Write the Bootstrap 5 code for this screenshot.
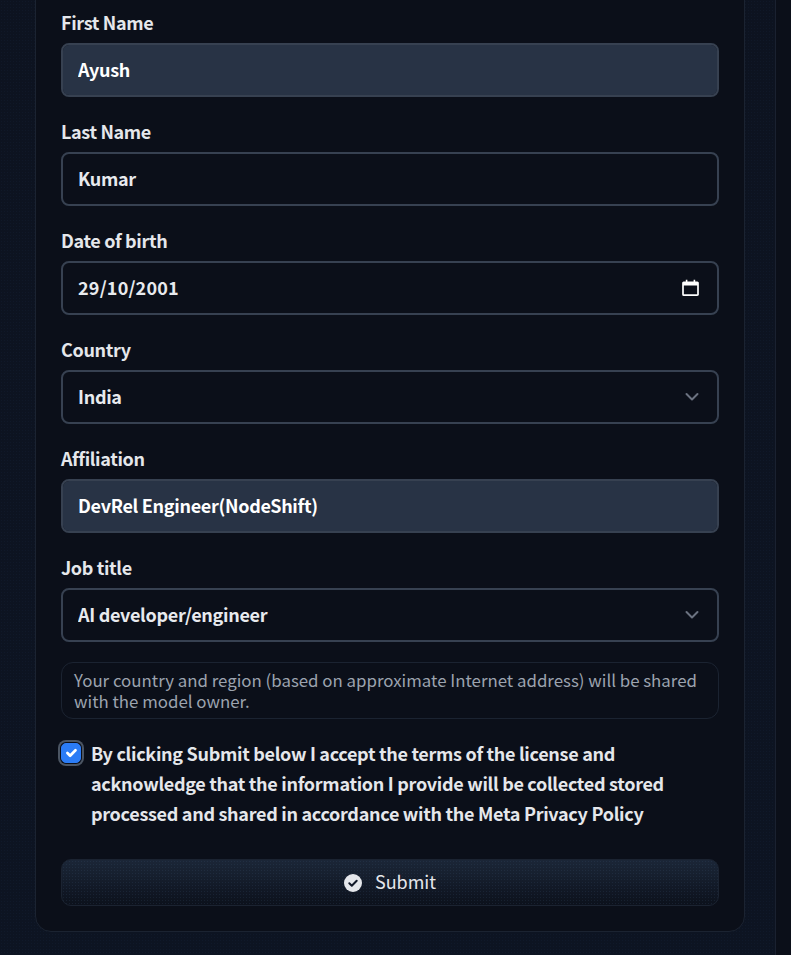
<!DOCTYPE html>
<html lang="en">
<head>
<meta charset="utf-8">
<title>Access form</title>
<link href="https://cdn.jsdelivr.net/npm/bootstrap@5.3.0/dist/css/bootstrap.min.css" rel="stylesheet">
<style>
:root{--page:#0b0f19;--line:#374151;--ink:#e5e7eb;}
html,body{height:955px;overflow:hidden;background:var(--page);}
body{font-family:"Noto Sans CJK JP","Source Sans Pro","Noto Sans",sans-serif;font-size:18px;color:var(--ink);}
.stage{width:776px;height:955px;padding:0 30px 0 35px;border-right:1px solid #1a2130;overflow:hidden;
  background-color:#0c111c;
  background-image:radial-gradient(rgba(40,60,95,.14) .6px,transparent .7px),linear-gradient(to bottom,#0d1320,#0d1422);
  background-size:3px 3px,100% 100%;}
.sheet{margin-top:-12px;height:944px;background:var(--page);border:1px solid #1b2331;border-radius:0 0 16px 16px;padding:20px 25px 0;}
.fieldset{margin-bottom:21px;}
.fname{display:block;font-weight:600;font-size:18px;line-height:27px;margin-bottom:7px;color:#e5e7eb;letter-spacing:-.35px;}
.entry.form-control,.entry.form-select{height:54px;border:2px solid var(--line);border-radius:8px;background-color:var(--page);color:#e8eaee;font-size:18px;font-weight:600;padding:0 15px 2px;line-height:48px;box-shadow:none;letter-spacing:-.3px;}
.entry.is-filled{background-color:#283345;color:#fff;}
.entry.datefield{letter-spacing:.2px;}
.entry.form-select{background-image:url("data:image/svg+xml,%3csvg xmlns='http://www.w3.org/2000/svg' viewBox='0 0 16 16'%3e%3cpath fill='none' stroke='%236b7280' stroke-linecap='round' stroke-linejoin='round' stroke-width='2' d='m2.5 5 5.5 5.5L13.500 5'/%3e%3c/svg%3e");background-position:right 17px center;background-size:16px 16px;}
.datewrap{position:relative;}
.calicon{position:absolute;right:20px;top:18px;width:17px;height:18px;}
.notice{border:1px solid #1b2331;border-radius:12px;padding:6px 12px;font-size:16.85px;line-height:21px;color:#9ca3af;height:57px;margin:-1px 0 19px;}
.agree{display:flex;gap:10px;align-items:flex-start;margin-bottom:31px;}
.agree .form-check-input{flex:none;width:20px;height:20px;margin:5px 0 0 0;background-color:#2b7cf6;border:1px solid #2b7cf6;border-radius:5px;box-shadow:0 0 0 1px var(--page),0 0 0 3px #4b5563;}
.agreetext{font-size:18px;font-weight:600;line-height:30px;color:#e5e7eb;letter-spacing:-.3px;}
.go.btn{display:flex;align-items:center;justify-content:center;gap:13px;width:100%;height:47px;border:1px solid #1b2331;border-radius:10px;color:#e5e7eb;font-size:18px;font-weight:400;
  background-color:#0e1522;
  background-image:radial-gradient(rgba(70,95,130,.18) .6px,transparent .7px),linear-gradient(to bottom,#1b2637,#0c111c);
  background-size:3px 3px,100% 100%;padding:0 0 2px;}
.tick{width:18px;height:18px;margin-top:2px;}
</style>
</head>
<body>
<div class="stage">
  <form class="sheet">
    <div class="fieldset">
      <label class="fname" for="f1">First Name</label>
      <input id="f1" class="form-control entry is-filled" value="Ayush">
    </div>
    <div class="fieldset">
      <label class="fname" for="f2">Last Name</label>
      <input id="f2" class="form-control entry" value="Kumar">
    </div>
    <div class="fieldset">
      <label class="fname" for="f3">Date of birth</label>
      <div class="datewrap">
        <input id="f3" class="form-control entry datefield" value="29/10/2001">
        <svg class="calicon" viewBox="0 0 17 18" aria-hidden="true"><path fill="none" stroke="#fff" stroke-width="1.7" d="M1.600 3.400h13.800a.6.6 0 0 1 .6.6v11.400a.8.8 0 0 1-.8.8H1.800a.8.8 0 0 1-.8-.8V4a.6.6 0 0 1 .6-.6Z"/><path fill="#fff" d="M1 3h15v3.600H1zM3.800.8h1.600v3H3.800zM11.600.8h1.600v3h-1.600z"/></svg>
      </div>
    </div>
    <div class="fieldset">
      <label class="fname" for="f4">Country</label>
      <select id="f4" class="form-select entry"><option>India</option></select>
    </div>
    <div class="fieldset">
      <label class="fname" for="f5">Affiliation</label>
      <input id="f5" class="form-control entry is-filled" value="DevRel Engineer(NodeShift)">
    </div>
    <div class="fieldset">
      <label class="fname" for="f6">Job title</label>
      <select id="f6" class="form-select entry"><option>AI developer/engineer</option></select>
    </div>
    <p class="notice">Your country and region (based on approximate Internet address) will be shared with the model owner.</p>
    <div class="agree">
      <input class="form-check-input" type="checkbox" id="f7" checked>
      <label class="agreetext" for="f7">By clicking Submit below I accept the terms of the license and acknowledge that the information I provide will be collected stored processed and shared in accordance with the Meta Privacy Policy</label>
    </div>
    <button type="button" class="btn go">
      <svg class="tick" viewBox="0 0 18 18" aria-hidden="true"><circle cx="9" cy="9" r="9" fill="#e5e7eb"/><path fill="none" stroke="#111827" stroke-width="2" stroke-linecap="round" stroke-linejoin="round" d="m5.300 9.300 2.500 2.400 4.900-5"/></svg>
      <span>Submit</span>
    </button>
  </form>
</div>
<script src="https://cdn.jsdelivr.net/npm/bootstrap@5.3.0/dist/js/bootstrap.bundle.min.js"></script>
</body>
</html>
